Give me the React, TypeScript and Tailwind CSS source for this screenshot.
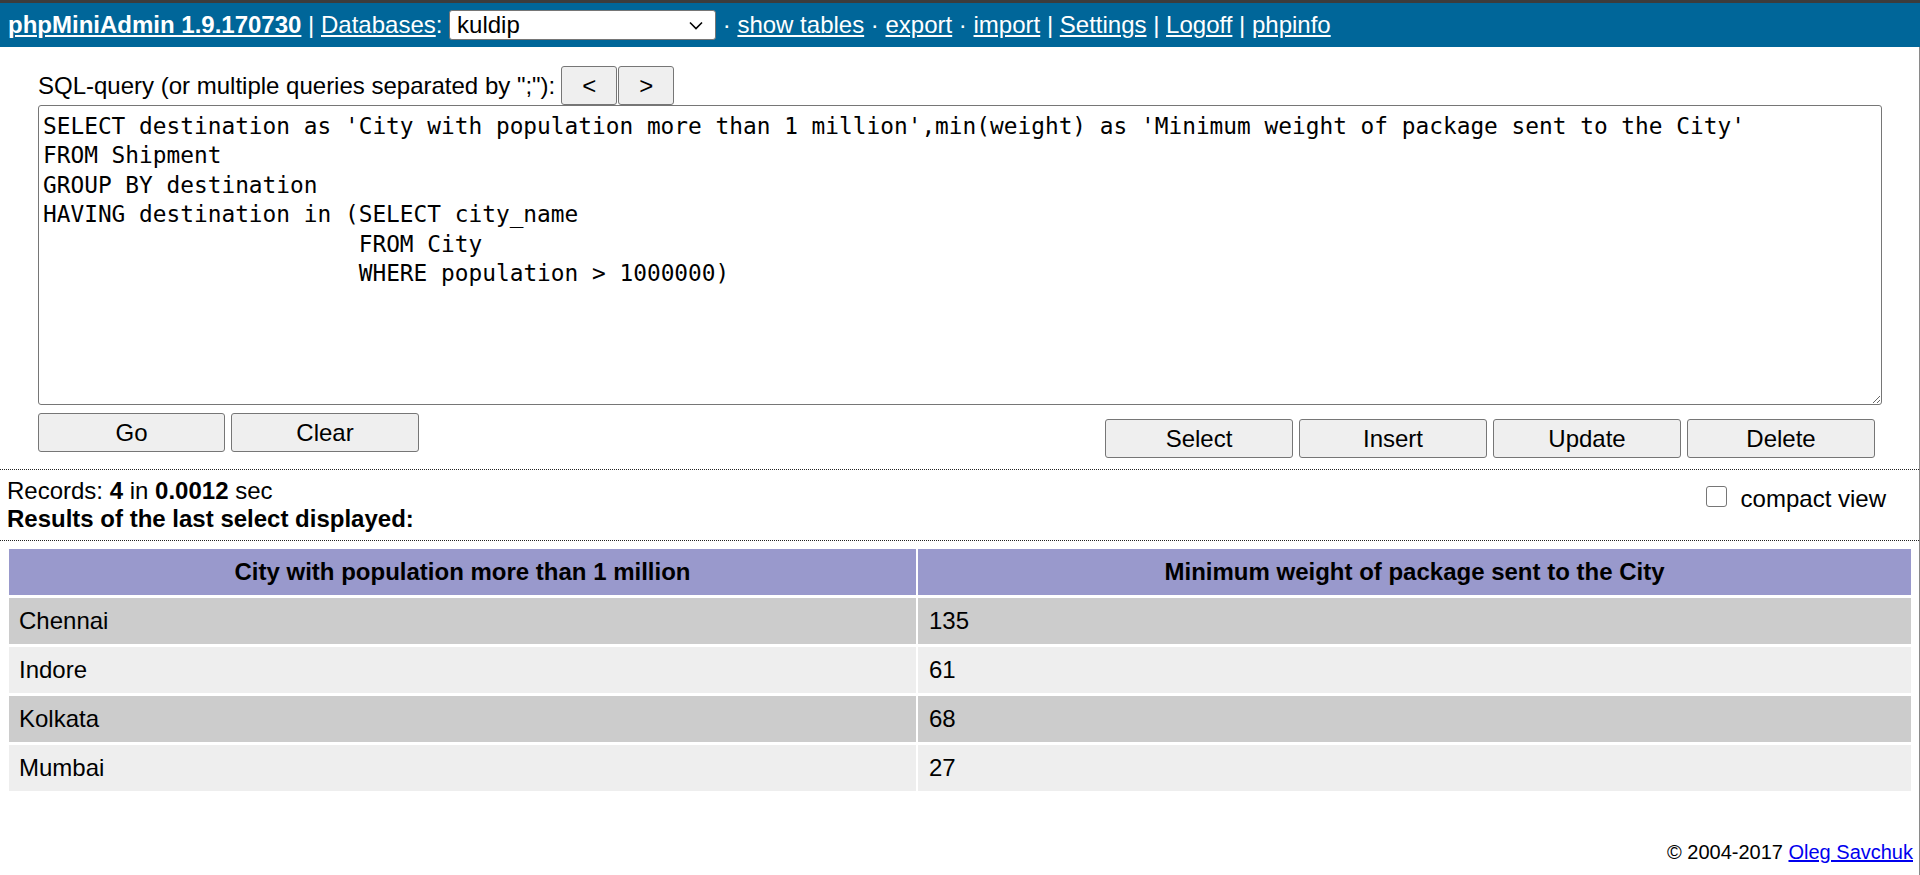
import React from "react";

// phpMiniAdmin query screen

const sql = `SELECT destination as 'City with population more than 1 million',min(weight) as 'Minimum weight of package sent to the City'
FROM Shipment
GROUP BY destination
HAVING destination in (SELECT city_name
                       FROM City
                       WHERE population > 1000000)`;

const rows: [string, string][] = [
  ["Chennai", "135"],
  ["Indore", "61"],
  ["Kolkata", "68"],
  ["Mumbai", "27"],
];

function Btn({
  children,
  className = "",
}: {
  children: React.ReactNode;
  className?: string;
}) {
  return (
    <button
      type="button"
      className={`h-[39px] rounded-[3px] border border-[#767676] bg-[#efefef] text-[24px] leading-none text-black ${className}`}
    >
      {children}
    </button>
  );
}

function HeaderLink({ children, bold = false }: { children: React.ReactNode; bold?: boolean }) {
  return (
    <a href="#" className={`text-white underline ${bold ? "font-bold" : ""}`}>
      {children}
    </a>
  );
}

export default function App() {
  return (
    <div className="min-h-screen bg-white font-['Liberation_Sans',Arial,sans-serif] text-[24px] text-black">
      {/* top strip + header */}
      <div className="h-[3px] bg-[#3c3c3c]" />
      <div className="flex h-[44px] items-center whitespace-pre bg-[#006699] pl-[8px] text-white">
        <HeaderLink bold>phpMiniAdmin 1.9.170730</HeaderLink>
        <span> | </span>
        <HeaderLink>Databases</HeaderLink>
        <span>: </span>
        <div className="flex h-[30px] w-[267px] items-center justify-between rounded-[3px] border border-[#767676] bg-white pl-[7px] pr-[12px] text-black">
          <span>kuldip</span>
          <svg width="14" height="9" viewBox="0 0 14 9" fill="none">
            <path d="M1 1.5 L7 7.5 L13 1.5" stroke="#000" strokeWidth="1.6" />
          </svg>
        </div>
        <span> · </span>
        <HeaderLink>show tables</HeaderLink>
        <span> · </span>
        <HeaderLink>export</HeaderLink>
        <span> · </span>
        <HeaderLink>import</HeaderLink>
        <span> | </span>
        <HeaderLink>Settings</HeaderLink>
        <span> | </span>
        <HeaderLink>Logoff</HeaderLink>
        <span> | </span>
        <HeaderLink>phpinfo</HeaderLink>
      </div>

      <div className="min-h-[828px] w-[1920px] border-r border-[#8a8a8a]">
        {/* query form */}
        <div className="pl-[38px] pt-[19px] pb-[11px]">
          <div className="flex h-[39px] items-center">
            <span>SQL-query (or multiple queries separated by ";"):</span>
            <div className="ml-[6px] flex gap-[1px]">
              <Btn className="w-[56px]">&lt;</Btn>
              <Btn className="w-[56px]">&gt;</Btn>
            </div>
          </div>
          <textarea
            defaultValue={sql}
            spellCheck={false}
            className="block h-[300px] w-[1844px] rounded-[3px] border border-[#767676] bg-white px-[4px] pt-[6px] font-['DejaVu_Sans_Mono',monospace] text-[22.8px] leading-[29.4px] text-black outline-none"
          />
          <div className="mt-[8px] flex h-[45px] w-[1837px] items-start justify-between">
            <div className="flex gap-[6px]">
              <Btn className="w-[187px]">Go</Btn>
              <Btn className="w-[188px]">Clear</Btn>
            </div>
            <div className="mt-[6px] flex gap-[6px]">
              <Btn className="w-[188px]">Select</Btn>
              <Btn className="w-[188px]">Insert</Btn>
              <Btn className="w-[188px]">Update</Btn>
              <Btn className="w-[188px]">Delete</Btn>
            </div>
          </div>
        </div>

        {/* status */}
        <div className="flex h-[71px] justify-between border-t border-dotted border-[#222] pl-[7px] pr-[33px] pt-[7px] leading-[28px]">
          <div>
            <div>
              Records: <b>4</b> in <b>0.0012</b> sec
            </div>
            <div className="font-bold">Results of the last select displayed:</div>
          </div>
          <label className="mt-[8px] flex h-[28px] items-center gap-[14px]">
            <span className="mt-[-6px] block h-[21px] w-[21px] rounded-[3px] border border-[#767676] bg-white" />
            <span>compact view</span>
          </label>
        </div>

        {/* results */}
        <div className="border-t border-dotted border-[#222] pl-[7px] pt-[5px]">
          <table className="w-[1906px] table-fixed border-separate border-spacing-x-[2px] border-spacing-y-[3px]">
            <colgroup>
              <col className="w-[907px]" />
              <col />
            </colgroup>
            <thead>
              <tr>
                <th className="h-[46px] bg-[#9999cc] px-[10px] text-center font-bold">
                  City with population more than 1 million
                </th>
                <th className="h-[46px] bg-[#9999cc] px-[10px] text-center font-bold">
                  Minimum weight of package sent to the City
                </th>
              </tr>
            </thead>
            <tbody>
              {rows.map(([city, w], i) => (
                <tr key={city} className={i % 2 === 0 ? "bg-[#cccccc]" : "bg-[#eeeeee]"}>
                  <td className="h-[46px] px-[10px]">{city}</td>
                  <td className="h-[46px] px-[11px]">{w}</td>
                </tr>
              ))}
            </tbody>
          </table>

          <div className="mt-[47px] pr-[6px] text-right text-[20px] leading-[23px]">
            © 2004-2017{" "}
            <a href="#" className="text-[#0000ee] underline">
              Oleg Savchuk
            </a>
          </div>
        </div>
      </div>
    </div>
  );
}
